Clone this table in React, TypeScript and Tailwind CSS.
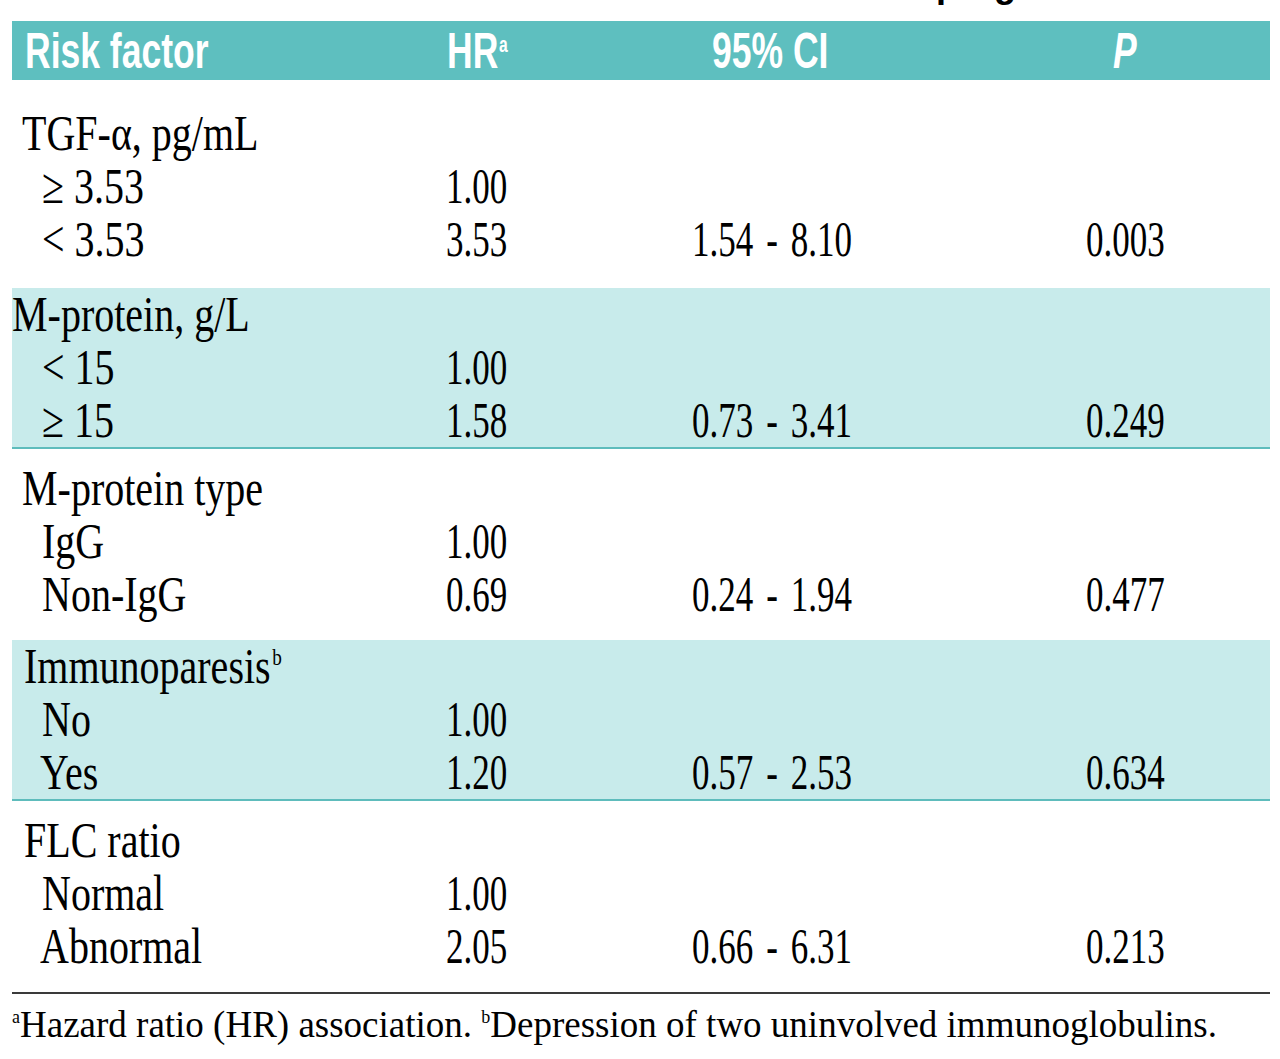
import React from "react";

type Row = [string, string, string, string, string];
type Group = { label: React.ReactNode; labelCls: string; teal: boolean; padCls: string; rows: Row[] };

const serif = { fontFamily: '"Liberation Serif", "Times New Roman", serif' };
const sans = { fontFamily: '"Liberation Sans", Arial, sans-serif' };

const groups: Group[] = [
  {
    label: "TGF-α, pg/mL",
    labelCls: "pl-[10px]",
    teal: false,
    padCls: "pt-[27px] pb-[22px]",
    rows: [
      ["≥ 3.53", "pl-[30px]", "1.00", "", ""],
      ["< 3.53", "pl-[30px]", "3.53", "1.54 - 8.10", "0.003"],
    ],
  },
  {
    label: "M-protein, g/L",
    labelCls: "pl-[0px]",
    teal: true,
    padCls: "",
    rows: [
      ["< 15", "pl-[30px]", "1.00", "", ""],
      ["≥ 15", "pl-[30px]", "1.58", "0.73 - 3.41", "0.249"],
    ],
  },
  {
    label: "M-protein type",
    labelCls: "pl-[10px]",
    teal: false,
    padCls: "pt-[13px] pb-[19px]",
    rows: [
      ["IgG", "pl-[30px]", "1.00", "", ""],
      ["Non-IgG", "pl-[30px]", "0.69", "0.24 - 1.94", "0.477"],
    ],
  },
  {
    label: (
      <>
        Immunoparesis<sup className="text-[24px] relative -top-[18px] ml-[2px]">b</sup>
      </>
    ),
    labelCls: "pl-[12px]",
    teal: true,
    padCls: "",
    rows: [
      ["No", "pl-[30px]", "1.00", "", ""],
      ["Yes", "pl-[28px]", "1.20", "0.57 - 2.53", "0.634"],
    ],
  },
  {
    label: "FLC ratio",
    labelCls: "pl-[12px]",
    teal: false,
    padCls: "pt-[13px] pb-[19px]",
    rows: [
      ["Normal", "pl-[30px]", "1.00", "", ""],
      ["Abnormal", "pl-[28px]", "2.05", "0.66 - 6.31", "0.213"],
    ],
  },
];

const gridCls = "grid grid-cols-[433px_247px_394px_184px] h-[53px] leading-[53px] text-[50px] text-black";

function Label({ children, cls }: { children: React.ReactNode; cls: string }) {
  return (
    <div className={"whitespace-nowrap " + cls}>
      <span className="inline-block origin-left scale-x-[0.8]">{children}</span>
    </div>
  );
}

function Num({ children, cls }: { children: React.ReactNode; cls: string }) {
  return (
    <div className={"whitespace-nowrap " + cls}>
      <span className="inline-block origin-left scale-x-[0.7] [word-spacing:6px]">{children}</span>
    </div>
  );
}

export default function App() {
  return (
    <div className="w-[1280px] h-[1059px] bg-white overflow-hidden" style={serif}>
      {/* clipped title above the table: only descenders visible */}
      <div className="h-[21px] overflow-hidden">
        <div className="-mt-[33px] pl-[936px] text-[36px] leading-none font-bold whitespace-nowrap text-black" style={sans}>
          progression
        </div>
      </div>

      <div className="ml-[12px] w-[1258px]">
        {/* header */}
        <div className="grid grid-cols-[433px_247px_394px_184px] h-[59px] items-center bg-[#5ebfbf] text-white font-bold text-[50px] leading-none" style={sans}>
          <div className="pl-[13px] whitespace-nowrap">
            <span className="inline-block origin-left scale-x-[0.71]">Risk factor</span>
          </div>
          <div className="pl-[2px] whitespace-nowrap">
            <span className="inline-block origin-left scale-x-[0.71]">
              HR<sup className="text-[22px] relative -top-[16px] ml-[1px]">a</sup>
            </span>
          </div>
          <div className="pl-[20px] whitespace-nowrap">
            <span className="inline-block origin-left scale-x-[0.71]">95% CI</span>
          </div>
          <div className="pl-[27px] whitespace-nowrap">
            <span className="inline-block origin-left scale-x-[0.71] italic">P</span>
          </div>
        </div>

        {groups.map((g, i) => (
          <div
            key={i}
            className={
              g.teal
                ? "bg-[#c8ebeb] border-b-2 border-[#5ebcbc]"
                : "bg-white " + g.padCls
            }
          >
            <div className={gridCls}>
              <Label cls={g.labelCls}>{g.label}</Label>
              <div />
              <div />
              <div />
            </div>
            {g.rows.map((r, j) => (
              <div key={j} className={gridCls}>
                <Label cls={r[1]}>{r[0]}</Label>
                <Num cls="pl-[1px]">{r[2]}</Num>
                <Num cls="pl-[0px]">{r[3]}</Num>
                <Num cls="pl-[0px]">{r[4]}</Num>
              </div>
            ))}
          </div>
        ))}

        {/* footnote */}
        <div className="border-t-2 border-[#3a3a3a] pt-[11px]">
          <p className="text-[37px] leading-[40px] text-black whitespace-nowrap">
            <sup className="text-[18px] relative -top-[14px]">a</sup>Hazard ratio (HR) association.{" "}
            <sup className="text-[18px] relative -top-[14px]">b</sup>Depression of two uninvolved immunoglobulins.
          </p>
        </div>
      </div>
    </div>
  );
}
